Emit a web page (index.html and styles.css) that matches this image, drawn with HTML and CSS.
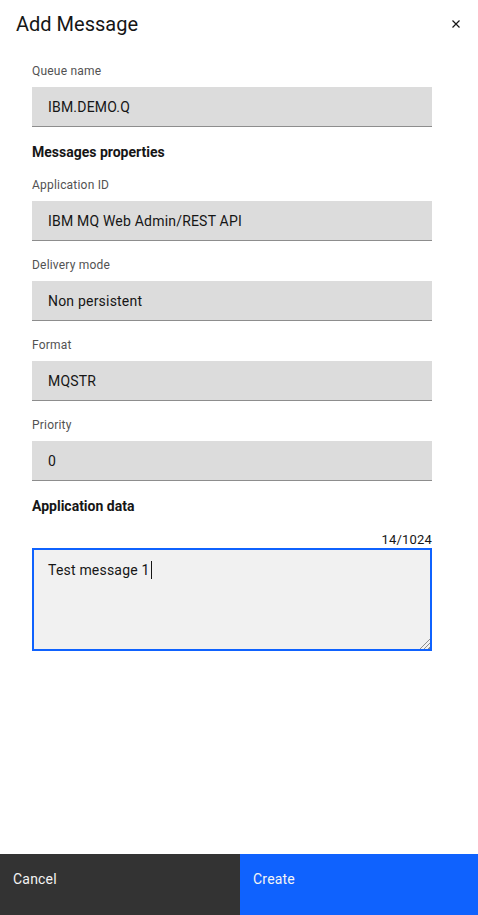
FILE: index.html
```html
<!DOCTYPE html>
<html lang="en">
<head>
<meta charset="utf-8">
<title>Add Message</title>
<link rel="stylesheet" href="styles.css">
</head>
<body>
<div class="modal">
  <header class="modal-header">
    <h2 class="modal-title">Add Message</h2>
    <button class="close" aria-label="Close">
      <svg width="16" height="16" viewBox="0 0 16 16"><path d="M4.5 4.5l7 7M11.5 4.5l-7 7" stroke="#161616" stroke-width="1.2" fill="none"/></svg>
    </button>
  </header>
  <div class="modal-body">
    <div class="field">
      <label class="label">Queue name</label>
      <div class="input">IBM.DEMO.Q</div>
    </div>
    <h3 class="section">Messages properties</h3>
    <div class="field">
      <label class="label">Application ID</label>
      <div class="input">IBM MQ Web Admin/REST API</div>
    </div>
    <div class="field">
      <label class="label">Delivery mode</label>
      <div class="input">Non persistent</div>
    </div>
    <div class="field">
      <label class="label">Format</label>
      <div class="input">MQSTR</div>
    </div>
    <div class="field">
      <label class="label">Priority</label>
      <div class="input">0</div>
    </div>
    <h3 class="section">Application data</h3>
    <div class="counter">14/1024</div>
    <div class="textarea">Test message 1<span class="caret"></span><span class="grip"></span></div>
  </div>
  <footer class="modal-footer">
    <button class="btn btn-secondary">Cancel</button>
    <button class="btn btn-primary">Create</button>
  </footer>
</div>
</body>
</html>
```
FILE: styles.css
```css
* { box-sizing: border-box; }
html, body { margin: 0; padding: 0; background: #ffffff; }
body {
  font-family: Roboto, "Liberation Sans", sans-serif;
  color: #161616;
}
.modal {
  width: 478px;
  height: 915px;
  display: flex;
  flex-direction: column;
  overflow: hidden;
}
.modal-header {
  display: flex;
  justify-content: space-between;
  align-items: flex-start;
  padding: 10px 14px 0 16px;
}
.modal-title {
  margin: 0;
  font-size: 20px;
  font-weight: 400;
  line-height: 28px;
}
.close {
  border: 0;
  background: transparent;
  padding: 0;
  margin-top: 6px;
  width: 16px;
  height: 16px;
  display: flex;
}
.modal-body {
  flex: 1;
  padding: 25px 46px 0 32px;
  display: flex;
  flex-direction: column;
}
.field { display: flex; flex-direction: column; margin-bottom: 16px; }
.label {
  font-size: 12px;
  line-height: 16px;
  color: #525252;
  margin-bottom: 8px;
  letter-spacing: 0.2px;
}
.input {
  height: 40px;
  background: #dcdcdc;
  border-bottom: 1px solid #8d8d8d;
  padding: 0 16px;
  display: flex;
  align-items: center;
  font-size: 14px;
  letter-spacing: 0.2px;
  color: #161616;
}
.section {
  margin: 0 0 16px;
  font-size: 14px;
  line-height: 18px;
  font-weight: 700;
}
.counter {
  text-align: right;
  font-size: 13px;
  line-height: 18px;
  letter-spacing: 0.2px;
  margin-bottom: -1px;
}
.textarea {
  position: relative;
  height: 103px;
  background: #f1f1f1;
  outline: 2px solid #0f62fe;
  outline-offset: -2px;
  padding: 13px 16px;
  font-size: 14px;
  line-height: 18px;
  letter-spacing: 0.2px;
}
.caret {
  display: inline-block;
  width: 1px;
  height: 18px;
  background: #161616;
  vertical-align: top;
  margin-left: 1px;
}
.grip {
  position: absolute;
  right: 2px;
  bottom: 2px;
  width: 11px;
  height: 11px;
  background: repeating-linear-gradient(135deg, transparent 0 2px, #8d8d8d 2px 3px);
  clip-path: polygon(100% 0, 100% 100%, 0 100%);
}
.modal-footer {
  display: grid;
  grid-template-columns: 240px 1fr;
  height: 61px;
}
.btn {
  border: 0;
  margin: 0;
  text-align: left;
  font-family: inherit;
  font-size: 14px;
  line-height: 18px;
  letter-spacing: 0.2px;
  padding: 16px 13px;
  display: flex;
  align-items: flex-start;
  color: #f4f4f4;
}
.btn-secondary { background: #333333; }
.btn-primary { background: #0f62fe; }
```
